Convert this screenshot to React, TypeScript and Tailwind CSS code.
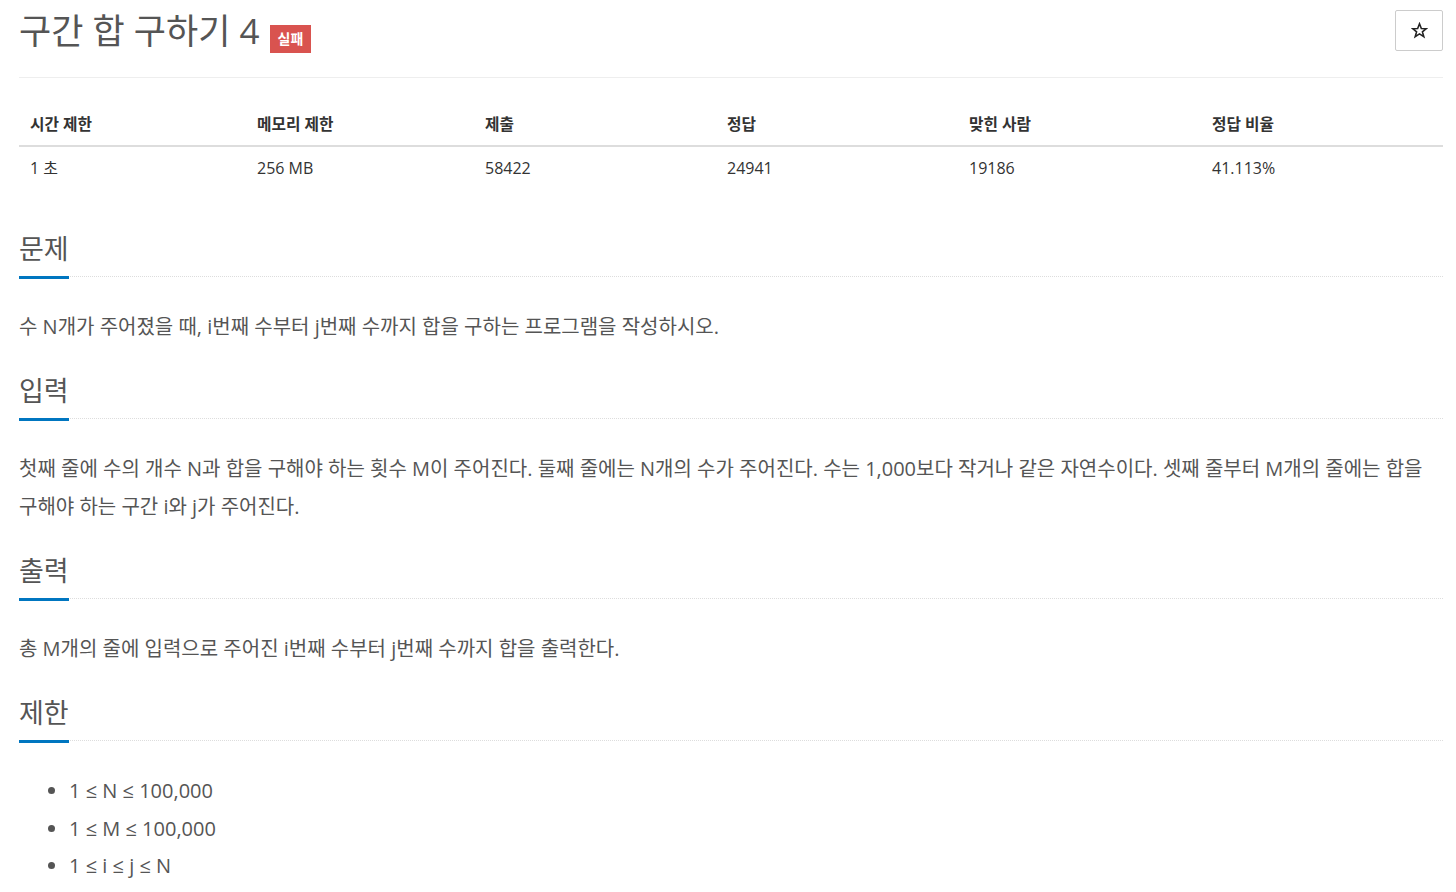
import type { ReactNode } from "react";

const stats = [
  { label: "시간 제한", value: "1 초", w: "w-[227px]" },
  { label: "메모리 제한", value: "256 MB", w: "w-[228px]" },
  { label: "제출", value: "58422", w: "w-[242px]" },
  { label: "정답", value: "24941", w: "w-[242px]" },
  { label: "맞힌 사람", value: "19186", w: "w-[243px]" },
  { label: "정답 비율", value: "41.113%", w: "" },
];

function Headline({ title }: { title: string }) {
  return (
    <div className="flex border-b border-dotted border-[#dddddd]">
      <h2 className="-mb-[3px] border-b-[3px] border-[#0076c0] pb-[13px] text-[27px] font-normal leading-[28px] text-[#555]">
        {title}
      </h2>
    </div>
  );
}

function Section({ title, children, first }: { title: string; children: ReactNode; first?: boolean }) {
  return (
    <section className={first ? "mt-[48px]" : "mt-[31px]"}>
      <Headline title={title} />
      <div className="mt-[31px] break-keep text-[20px] leading-[38px] text-[#555]">{children}</div>
    </section>
  );
}

function StarIcon() {
  return (
    <svg width="17" height="17" viewBox="0 0 24 24" fill="none" stroke="#222" strokeWidth="2.2" strokeLinejoin="miter">
      <polygon points="12,2.5 14.6,9.2 21.6,9.4 16.1,13.8 18.1,20.8 12,16.8 5.9,20.8 7.9,13.8 2.4,9.4 9.4,9.2" />
    </svg>
  );
}

export default function App() {
  return (
    <div className="min-h-screen bg-white pl-[19px] pr-[13px] font-['Open_Sans','Noto_Sans_CJK_KR',sans-serif] text-[#555]">
      {/* 제목 */}
      <div className="flex h-[53px] items-start justify-between pt-[10px]">
        <div className="mt-[3px] flex items-start">
          <h1 className="text-[35px] font-normal leading-[36px] text-[#555]">구간 합 구하기 4</h1>
          <span className="ml-[10px] mt-[12px] bg-[#d9534f] px-[8px] text-[14px] font-bold leading-[28px] text-white">
            실패
          </span>
        </div>
        <button className="flex h-[41px] w-[48px] items-center justify-center rounded-[2px] border border-[#cccccc] bg-white">
          <StarIcon />
        </button>
      </div>
      <div className="mt-[24px] border-t border-[#eeeeee]" />

      {/* 정보 */}
      <table className="mt-[22px] w-full border-collapse text-left">
        <thead>
          <tr className="border-b-2 border-[#dddddd]">
            {stats.map((s) => (
              <th key={s.label} className={`${s.w} pb-[11px] pl-[11px] pt-[14px] text-[15.75px] font-bold leading-[20px] text-[#333]`}>
                {s.label}
              </th>
            ))}
          </tr>
        </thead>
        <tbody>
          <tr>
            {stats.map((s) => (
              <td key={s.label} className="pb-[9px] pl-[11px] pt-[11px] text-[16px] leading-[20px] text-[#333]">
                {s.value}
              </td>
            ))}
          </tr>
        </tbody>
      </table>

      <Section title="문제" first>
        <p>수 N개가 주어졌을 때, i번째 수부터 j번째 수까지 합을 구하는 프로그램을 작성하시오.</p>
      </Section>

      <Section title="입력">
        <p>
          첫째 줄에 수의 개수 N과 합을 구해야 하는 횟수 M이 주어진다. 둘째 줄에는 N개의 수가 주어진다. 수는 1,000보다 작거나 같은 자연수이다. 셋째 줄부터 M개의 줄에는 합을 구해야 하는 구간 i와 j가 주어진다.
        </p>
      </Section>

      <Section title="출력">
        <p>총 M개의 줄에 입력으로 주어진 i번째 수부터 j번째 수까지 합을 출력한다.</p>
      </Section>

      <Section title="제한">
        <ul className="list-disc pl-[50px] leading-[37.5px] marker:text-[#555]">
          <li>1 ≤ N ≤ 100,000</li>
          <li>1 ≤ M ≤ 100,000</li>
          <li>1 ≤ i ≤ j ≤ N</li>
        </ul>
      </Section>
    </div>
  );
}
